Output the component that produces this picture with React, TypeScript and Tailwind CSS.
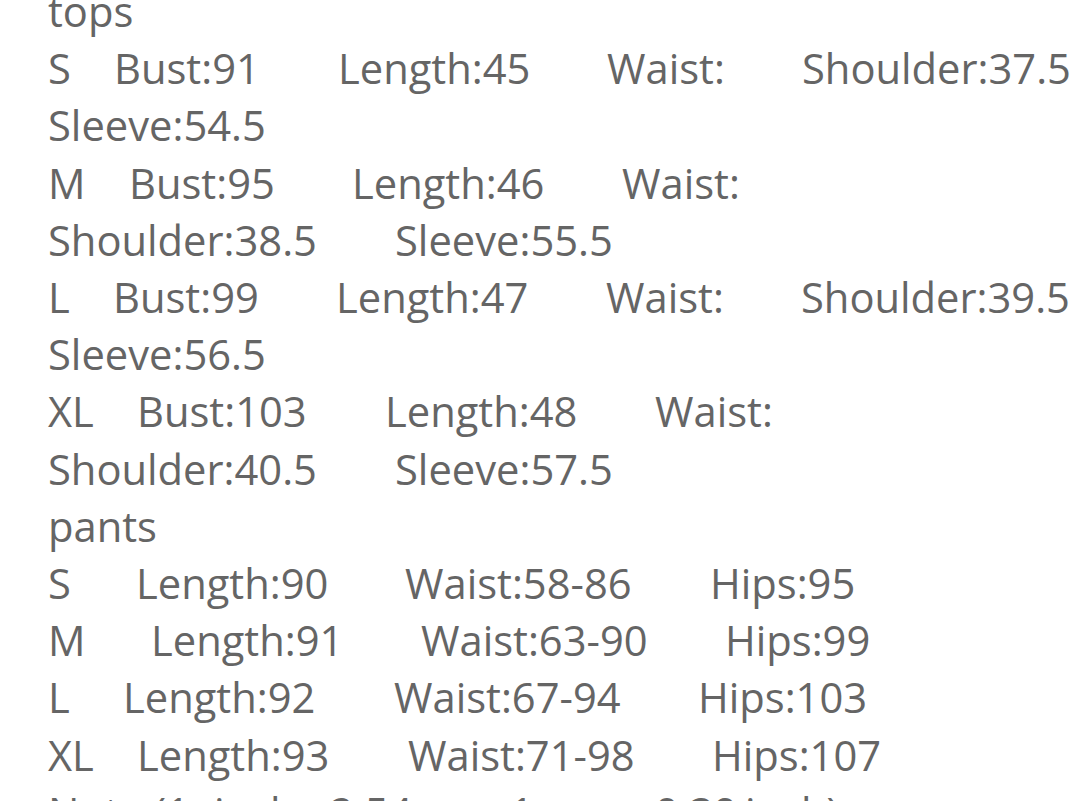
import React from "react";

type W = [string, number];
const lines: W[][] = [
  [["tops", 48]],
  [["S", 48], ["Bust:91", 114], ["Length:45", 338], ["Waist:", 607], ["Shoulder:37.5", 802]],
  [["Sleeve:54.5", 48]],
  [["M", 48], ["Bust:95", 129], ["Length:46", 352], ["Waist:", 622]],
  [["Shoulder:38.5", 48], ["Sleeve:55.5", 395]],
  [["L", 48], ["Bust:99", 113], ["Length:47", 336], ["Waist:", 606], ["Shoulder:39.5", 801]],
  [["Sleeve:56.5", 48]],
  [["XL", 48], ["Bust:103", 137], ["Length:48", 385], ["Waist:", 655]],
  [["Shoulder:40.5", 48], ["Sleeve:57.5", 395]],
  [["pants", 48]],
  [["S", 48], ["Length:90", 136], ["Waist:58-86", 405], ["Hips:95", 710]],
  [["M", 48], ["Length:91", 151], ["Waist:63-90", 421], ["Hips:99", 725]],
  [["L", 48], ["Length:92", 123], ["Waist:67-94", 394], ["Hips:103", 698]],
  [["XL", 48], ["Length:93", 137], ["Waist:71-98", 408], ["Hips:107", 712]],
  [["Note:(1", 48], ["inch", 214], ["=", 300], ["2.54", 330], ["cm,", 430], ["1", 510], ["cm", 545], ["=", 610], ["0.39", 655], ["inch)", 745]],
];

export default function App() {
  return (
    <div className="w-[1083px] h-[801px] overflow-hidden bg-white">
      <div
        className="mt-[-18px] text-[41.7px] leading-[57.2px] text-[#656565] whitespace-nowrap"
        style={{ fontFamily: '"Open Sans", "Noto Sans", sans-serif' }}
      >
        {lines.map((ln, i) => (
          <div key={i} className="flex">
            {ln.map(([t, x], j) => {
              const next = j + 1 < ln.length ? ln[j + 1][1] : undefined;
              const left = j === 0 ? x : 0;
              return (
                <span
                  key={j}
                  className="inline-block shrink-0"
                  style={{ marginLeft: left, width: next !== undefined ? next - x : undefined }}
                >
                  {t}
                </span>
              );
            })}
          </div>
        ))}
      </div>
    </div>
  );
}
